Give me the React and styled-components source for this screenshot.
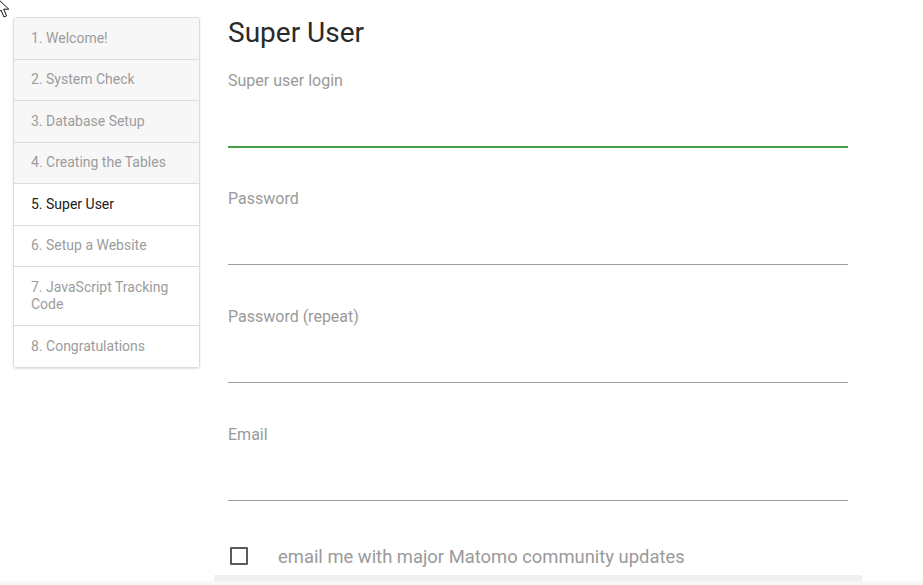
import React from "react";
import styled, { createGlobalStyle } from "styled-components";

const GlobalStyle = createGlobalStyle`
  html, body {
    margin: 0;
    padding: 0;
    background: #fff;
    font-family: Roboto, "Liberation Sans", Arial, sans-serif;
  }
`;

const steps = [
  { label: "1. Welcome!", state: "done" },
  { label: "2. System Check", state: "done" },
  { label: "3. Database Setup", state: "done" },
  { label: "4. Creating the Tables", state: "done" },
  { label: "5. Super User", state: "current" },
  { label: "6. Setup a Website", state: "todo" },
  { label: "7. JavaScript Tracking Code", state: "todo" },
  { label: "8. Congratulations", state: "todo" },
];

const fields = [
  { label: "Super user login", focused: true },
  { label: "Password" },
  { label: "Password (repeat)" },
  { label: "Email" },
];

export default function App() {
  return (
    <Page>
      <GlobalStyle />
      <Cursor viewBox="0 0 14 22" aria-hidden="true">
        <path
          d="M1 1 L1 17 L5 13.2 L8 20 L10.6 18.8 L7.7 12.2 L12.8 12.2 Z"
          fill="#fff"
          stroke="#111"
          strokeWidth="1"
          strokeLinejoin="round"
        />
      </Cursor>
      <Main>
        <Steps>
          {steps.map((s) => (
            <Step key={s.label} state={s.state}>
              {s.label}
            </Step>
          ))}
        </Steps>
        <Content>
          <Title>Super User</Title>
          {fields.map((f) => (
            <Field key={f.label}>
              <Label>{f.label}</Label>
              <Input type="text" focused={f.focused} />
            </Field>
          ))}
          <CheckRow>
            <Checkbox />
            <CheckText>email me with major Matomo community updates</CheckText>
          </CheckRow>
          <ButtonEdge />
        </Content>
      </Main>
      <Footer />
    </Page>
  );
}

const Page = styled.div`
  position: relative;
  min-height: 600px;
`;

const Cursor = styled.svg`
  position: absolute;
  left: -4px;
  top: -3px;
  width: 14px;
  height: 22px;
  z-index: 5;
`;

const Main = styled.div`
  display: flex;
  align-items: flex-start;
  gap: 28px;
  padding: 17px 0 0 13px;
`;

const Steps = styled.ul`
  list-style: none;
  margin: 0;
  padding: 0;
  width: 185px;
  border: 1px solid #dcdcdc;
  border-radius: 3px;
  box-shadow: 0 1px 2px rgba(0, 0, 0, 0.12);
  overflow: hidden;
`;

const Step = styled.li`
  padding: 11.5px 17px;
  font-size: 14px;
  line-height: 17.5px;
  color: ${(p) => (p.state === "current" ? "#212121" : "#9c9c9c")};
  background: ${(p) => (p.state === "done" ? "#f7f7f7" : "#fff")};
  border-bottom: 1px solid #dcdcdc;
  &:last-child {
    border-bottom: none;
  }
`;

const Content = styled.div`
  width: 620px;
  display: flex;
  flex-direction: column;
`;

const Title = styled.h2`
  margin: 0 0 22px;
  font-size: 28px;
  font-weight: 400;
  line-height: 32px;
  color: #2a2a2a;
`;

const Field = styled.div`
  display: flex;
  flex-direction: column;
  margin-bottom: 42px;
`;

const Label = styled.label`
  font-size: 16px;
  line-height: 20px;
  color: #9a9a9a;
`;

const Input = styled.input`
  box-sizing: border-box;
  height: ${(p) => (p.focused ? "57px" : "56px")};
  margin-bottom: ${(p) => (p.focused ? "-1px" : "0")};
  padding: 0;
  border: none;
  border-bottom: ${(p) => (p.focused ? "2px solid #43a047" : "1px solid #9e9e9e")};
  outline: none;
  background: transparent;
  font-size: 16px;
`;

const CheckRow = styled.div`
  display: flex;
  align-items: center;
  gap: 30px;
  height: 26px;
  padding-left: 2px;
`;

const Checkbox = styled.span`
  box-sizing: border-box;
  width: 18px;
  height: 18px;
  border: 2px solid #5a5a5a;
  border-radius: 1px;
`;

const CheckText = styled.span`
  font-size: 18.4px;
  color: #9a9a9a;
`;

const ButtonEdge = styled.div`
  margin: 6px 0 0 -14px;
  width: 648px;
  height: 6px;
  background: #eff0f1;
`;

const Footer = styled.div`
  height: 30px;
  background: #f7f7f7;
`;
